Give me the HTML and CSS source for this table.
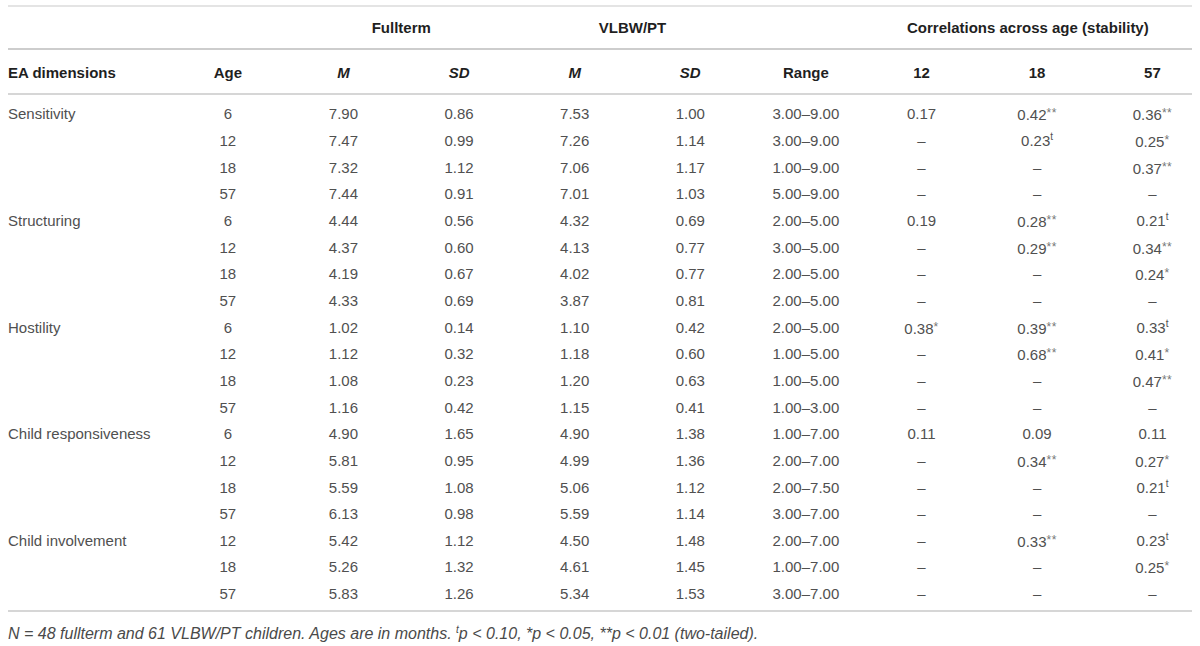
FILE: index.html
```html
<!DOCTYPE html>
<html lang="en">
<head>
<meta charset="utf-8">
<title>EA dimensions table</title>
<link rel="stylesheet" href="styles.css">
</head>
<body>
<table class="ea">
  <colgroup>
    <col class="c-name">
    <col span="8" class="c-num">
    <col class="c-last">
  </colgroup>
  <thead>
    <tr class="h1">
      <th></th><th></th>
      <th colspan="2">Fullterm</th>
      <th colspan="2">VLBW/PT</th>
      <th></th>
      <th colspan="3">Correlations across age (stability)</th>
    </tr>
    <tr class="h2">
      <th class="left">EA dimensions</th>
      <th>Age</th>
      <th><i>M</i></th>
      <th><i>SD</i></th>
      <th><i>M</i></th>
      <th><i>SD</i></th>
      <th>Range</th>
      <th>12</th>
      <th>18</th>
      <th class="last">57</th>
    </tr>
  </thead>
  <tbody>
    <tr class="first"><td class="left">Sensitivity</td><td>6</td><td>7.90</td><td>0.86</td><td>7.53</td><td>1.00</td><td>3.00–9.00</td><td>0.17</td><td>0.42<span class="ast">**</span></td><td class="last">0.36<span class="ast">**</span></td></tr>
    <tr><td class="left"></td><td>12</td><td>7.47</td><td>0.99</td><td>7.26</td><td>1.14</td><td>3.00–9.00</td><td>–</td><td>0.23<sup class="t">t</sup></td><td class="last">0.25<span class="ast">*</span></td></tr>
    <tr><td class="left"></td><td>18</td><td>7.32</td><td>1.12</td><td>7.06</td><td>1.17</td><td>1.00–9.00</td><td>–</td><td>–</td><td class="last">0.37<span class="ast">**</span></td></tr>
    <tr><td class="left"></td><td>57</td><td>7.44</td><td>0.91</td><td>7.01</td><td>1.03</td><td>5.00–9.00</td><td>–</td><td>–</td><td class="last">–</td></tr>
    <tr><td class="left">Structuring</td><td>6</td><td>4.44</td><td>0.56</td><td>4.32</td><td>0.69</td><td>2.00–5.00</td><td>0.19</td><td>0.28<span class="ast">**</span></td><td class="last">0.21<sup class="t">t</sup></td></tr>
    <tr><td class="left"></td><td>12</td><td>4.37</td><td>0.60</td><td>4.13</td><td>0.77</td><td>3.00–5.00</td><td>–</td><td>0.29<span class="ast">**</span></td><td class="last">0.34<span class="ast">**</span></td></tr>
    <tr><td class="left"></td><td>18</td><td>4.19</td><td>0.67</td><td>4.02</td><td>0.77</td><td>2.00–5.00</td><td>–</td><td>–</td><td class="last">0.24<span class="ast">*</span></td></tr>
    <tr><td class="left"></td><td>57</td><td>4.33</td><td>0.69</td><td>3.87</td><td>0.81</td><td>2.00–5.00</td><td>–</td><td>–</td><td class="last">–</td></tr>
    <tr><td class="left">Hostility</td><td>6</td><td>1.02</td><td>0.14</td><td>1.10</td><td>0.42</td><td>2.00–5.00</td><td>0.38<span class="ast">*</span></td><td>0.39<span class="ast">**</span></td><td class="last">0.33<sup class="t">t</sup></td></tr>
    <tr><td class="left"></td><td>12</td><td>1.12</td><td>0.32</td><td>1.18</td><td>0.60</td><td>1.00–5.00</td><td>–</td><td>0.68<span class="ast">**</span></td><td class="last">0.41<span class="ast">*</span></td></tr>
    <tr><td class="left"></td><td>18</td><td>1.08</td><td>0.23</td><td>1.20</td><td>0.63</td><td>1.00–5.00</td><td>–</td><td>–</td><td class="last">0.47<span class="ast">**</span></td></tr>
    <tr><td class="left"></td><td>57</td><td>1.16</td><td>0.42</td><td>1.15</td><td>0.41</td><td>1.00–3.00</td><td>–</td><td>–</td><td class="last">–</td></tr>
    <tr><td class="left">Child responsiveness</td><td>6</td><td>4.90</td><td>1.65</td><td>4.90</td><td>1.38</td><td>1.00–7.00</td><td>0.11</td><td>0.09</td><td class="last">0.11</td></tr>
    <tr><td class="left"></td><td>12</td><td>5.81</td><td>0.95</td><td>4.99</td><td>1.36</td><td>2.00–7.00</td><td>–</td><td>0.34<span class="ast">**</span></td><td class="last">0.27<span class="ast">*</span></td></tr>
    <tr><td class="left"></td><td>18</td><td>5.59</td><td>1.08</td><td>5.06</td><td>1.12</td><td>2.00–7.50</td><td>–</td><td>–</td><td class="last">0.21<sup class="t">t</sup></td></tr>
    <tr><td class="left"></td><td>57</td><td>6.13</td><td>0.98</td><td>5.59</td><td>1.14</td><td>3.00–7.00</td><td>–</td><td>–</td><td class="last">–</td></tr>
    <tr><td class="left">Child involvement</td><td>12</td><td>5.42</td><td>1.12</td><td>4.50</td><td>1.48</td><td>2.00–7.00</td><td>–</td><td>0.33<span class="ast">**</span></td><td class="last">0.23<sup class="t">t</sup></td></tr>
    <tr><td class="left"></td><td>18</td><td>5.26</td><td>1.32</td><td>4.61</td><td>1.45</td><td>1.00–7.00</td><td>–</td><td>–</td><td class="last">0.25<span class="ast">*</span></td></tr>
    <tr class="end"><td class="left"></td><td>57</td><td>5.83</td><td>1.26</td><td>5.34</td><td>1.53</td><td>3.00–7.00</td><td>–</td><td>–</td><td class="last">–</td></tr>
  </tbody>
</table>
<p class="note"><i>N</i> = 48 fullterm and 61 VLBW/PT children. Ages are in months. <sup class="t">t</sup><i>p</i> &lt; 0.10, *<i>p</i> &lt; 0.05, **<i>p</i> &lt; 0.01 (two-tailed).</p>
</body>
</html>
```
FILE: styles.css
```css
html, body {
  background: #ffffff;
}
body {
  margin: 5px 8px 0;
  font-family: "Liberation Sans", Arial, sans-serif;
  font-size: 15px;
  color: #505050;
}
.ea {
  width: 1184px;
  table-layout: fixed;
  border-collapse: collapse;
}
.c-name { width: 162px; }
.c-num { width: 115.6px; }
.c-last { width: 97px; }

.ea th,
.ea td {
  padding: 0;
  text-align: center;
  white-space: nowrap;
  vertical-align: middle;
}
.ea th {
  font-weight: bold;
  color: #1f1f1f;
}
.ea .left {
  text-align: left;
}
.ea .last {
  padding-left: 18px;
}
.h1 {
  border-top: 2px solid #e4e4e4;
  border-bottom: 2px solid #cdcdcd;
}
.h1 th { height: 41px; }
.h2 {
  border-bottom: 2px solid #d6d6d6;
}
.h2 th { height: 41px; padding-top: 2px; }
.ea td { height: 26.67px; line-height: 18px; }
.ea tr.first td { padding-top: 6px; }
.ea tr.end td { padding-bottom: 3px; }
.ea tr.end { border-bottom: 2px solid #d6d6d6; }

.ast {
  font-size: 12px;
  vertical-align: 3px;
  color: #777;
  letter-spacing: 0.5px;
}
sup.t {
  font-size: 10px;
  line-height: 0;
  vertical-align: 6px;
}
.note {
  margin: 13px 0 0;
  font-style: italic;
  font-size: 16px;
  line-height: 18px;
  color: #4a4a4a;
}
```
